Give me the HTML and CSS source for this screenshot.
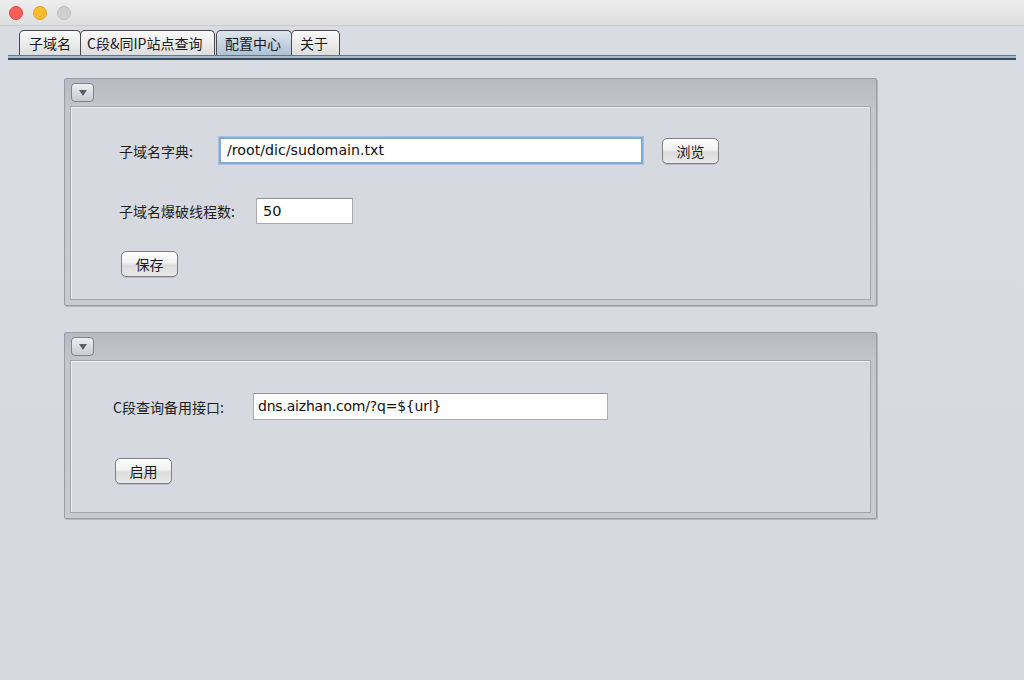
FILE: index.html
```html
<!DOCTYPE html>
<html>
<head>
<meta charset="utf-8">
<link rel="stylesheet" href="styles.css">
</head>
<body>
<div class="window">
  <div class="titlebar">
    <span class="light red"></span>
    <span class="light yellow"></span>
    <span class="light gray"></span>
  </div>
  <div class="tabs">
    <div class="tab">子域名</div>
    <div class="tab">C段&amp;同IP站点查询</div>
    <div class="tab active">配置中心</div>
    <div class="tab">关于</div>
  </div>
  <div class="tabline"></div>
  <div class="content">
    <div class="panel">
      <div class="panel-head"><div class="toggle"><span class="tri"></span></div></div>
      <div class="panel-body body1">
        <div class="row r1">
          <span class="label w100">子域名字典:</span>
          <div class="input focus w424">/root/dic/sudomain.txt</div>
          <div class="btn ml19">浏览</div>
        </div>
        <div class="row r2">
          <span class="label w137">子域名爆破线程数:</span>
          <div class="input w97">50</div>
        </div>
        <div class="row r3">
          <div class="btn ml2">保存</div>
        </div>
      </div>
    </div>
    <div class="panel p2">
      <div class="panel-head"><div class="toggle"><span class="tri"></span></div></div>
      <div class="panel-body body2">
        <div class="row">
          <span class="label w140">C段查询备用接口:</span>
          <div class="input w355">dns.aizhan.com/?q=${url}</div>
        </div>
        <div class="row r4">
          <div class="btn ml2">启用</div>
        </div>
      </div>
    </div>
  </div>
</div>
</body>
</html>
```

FILE: styles.css
```css
* { box-sizing: border-box; }
html, body { margin: 0; padding: 0; }
body {
  width: 1024px;
  height: 680px;
  overflow: hidden;
  background: #d6d9df;
  font-family: "DejaVu Sans", "Noto Sans CJK SC", sans-serif;
  color: #1a1a1a;
}
.window {
  height: 680px;
  background: linear-gradient(#d9dce2, #d5d8de);
}
.titlebar {
  height: 26px;
  background: linear-gradient(#ededed, #dedede);
  border-bottom: 1px solid #cbcbcb;
  display: flex;
  align-items: center;
  padding-left: 9px;
  gap: 10px;
}
.light {
  width: 14px;
  height: 14px;
  border-radius: 50%;
}
.light.red { background: #fc5f57; border: 1px solid #e0443e; }
.light.yellow { background: #fdbc2e; border: 1px solid #dea123; }
.light.gray { background: #d0d0d0; border: 1px solid #bdbdbd; }

.tabs {
  display: flex;
  padding-left: 19px;
  margin-top: 4px;
  height: 25px;
  align-items: flex-end;
}
.tab {
  height: 25px;
  border: 1px solid #4a4a4a;
  border-bottom: none;
  border-radius: 5px 5px 0 0;
  background: linear-gradient(#fafafa, #dedede);
  font-size: 14px;
  line-height: 24px;
  padding: 0 8px;
  color: #1a1a1a;
  font-family: "Noto Sans CJK SC", "DejaVu Sans", sans-serif;
  margin-right: -1px;
}
.tab:nth-child(1) { width: 62px; text-align: center; }
.tab:nth-child(2) { width: 135px; padding: 0 6px; }
.tab:nth-child(3) { width: 76px; margin-left: 2px; }
.tab:nth-child(4) { width: 49px; }
.tab.active {
  background: linear-gradient(#dfe6ee, #afc1d4);
  position: relative;
  z-index: 1;
}
.tabline {
  margin: 0 8px;
  height: 5px;
  border-top: 1px solid #6a7686;
  background: #a9bccf;
  border-bottom: 2px solid #3d4a5a;
}
.content {
  padding-left: 64px;
  padding-top: 18px;
}
.panel {
  width: 813px;
  border: 1px solid #9a9da5;
  border-radius: 2px;
  background: linear-gradient(#b6b9c1, #c4c7ce 30px, #c8cbd2);
  padding: 0 5px 5px 5px;
  box-shadow: 1px 1px 0 #b4b7be;
}
.p2 { margin-top: 26px; }
.panel-head {
  height: 27px;
  display: flex;
  align-items: center;
  padding-left: 1px;
}
.toggle {
  width: 23px;
  height: 19px;
  border: 1px solid #7f838a;
  border-radius: 4px;
  background: linear-gradient(#eeeff1, #c9cbd0);
  display: flex;
  align-items: center;
  justify-content: center;
}
.tri {
  width: 0;
  height: 0;
  border-left: 4px solid transparent;
  border-right: 4px solid transparent;
  border-top: 6px solid #5d6068;
  margin-top: 1px;
}
.panel-body {
  background: #d6d9df;
  border: 1px solid #a3a6ad;
  box-shadow: inset 1px 1px 0 #eceef1;
}
.body1 {
  height: 194px;
  padding: 30px 0 0 48px;
}
.body2 {
  height: 153px;
  padding: 32px 0 0 42px;
}
.row {
  display: flex;
  align-items: center;
}
.r2 { margin-top: 34px; }
.r3 { margin-top: 27px; }
.r4 { margin-top: 38px; }
.label {
  font-size: 14px;
  font-family: "Noto Sans CJK SC", "DejaVu Sans", sans-serif;
  color: #1e1e1e;
}
.w100 { width: 100px; }
.w137 { width: 137px; }
.w140 { width: 140px; }
.input {
  height: 27px;
  background: #fff;
  border: 1px solid #a9abb0;
  border-top-color: #8f9196;
  font-size: 14.5px;
  line-height: 25px;
  padding-left: 7px;
  color: #111;
}
.r2 .input { height: 26px; padding-left: 6px; }
.input.focus {
  border: 2px solid #82a8d6;
  box-shadow: 0 0 0 1px #a9c3e3;
  line-height: 23px;
  padding-left: 6px;
  font-size: 14.2px;
}
.w424 { width: 424px; }
.w97 { width: 97px; }
.w355 { width: 355px; padding-left: 4px; font-size: 14px; letter-spacing: -0.2px; }
.btn {
  width: 57px;
  height: 26px;
  border: 1px solid #7e8085;
  border-radius: 5px;
  background: linear-gradient(#ffffff, #f1f1f1 45%, #dcdcdc 55%, #e8e8e8);
  box-shadow: 0 1px 0 #b8bbc1;
  font-size: 14px;
  line-height: 24px;
  text-align: center;
  font-family: "Noto Sans CJK SC", "DejaVu Sans", sans-serif;
  color: #1a1a1a;
}
.ml19 { margin-left: 19px; }
.ml2 { margin-left: 2px; }
```
